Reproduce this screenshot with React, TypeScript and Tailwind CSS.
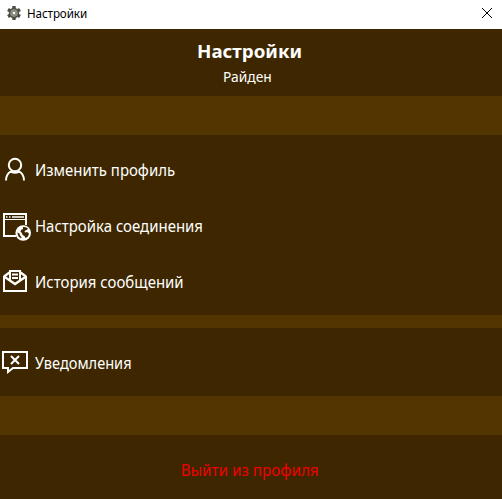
import type { ReactNode } from "react";

function GearIcon() {
  return (
    <svg width="14" height="14" viewBox="0 0 14 14" fill="none">
      <path d="M7 0v14M1 3.500l12 7M1 10.500l12-7" stroke="#4b4e43" strokeWidth="3.400" />
      <circle cx="7" cy="7" r="4.200" fill="#fff" stroke="#4b4e43" strokeWidth="2" />
      <circle cx="7" cy="7" r="3" fill="#fff" stroke="#8b8e7e" strokeWidth="1.600" />
      <circle cx="7" cy="7" r="1.900" fill="#fff" stroke="#4b4e43" strokeWidth=".8" />
    </svg>
  );
}

function UserIcon() {
  return (
    <svg width="32" height="32" viewBox="0 0 32 32" fill="none" stroke="#fff" strokeWidth="2">
      <circle cx="15" cy="11" r="6.200" />
      <path d="M6 26.500C6 22 8 18.800 11 17.300c2.500 1.700 5.500 1.700 8 0 3 1.500 5 4.700 5 9.200" />
    </svg>
  );
}

function BrowserIcon() {
  return (
    <svg width="32" height="32" viewBox="0 0 32 32" fill="none">
      <path d="M16 26H4V4h22v11" stroke="#fff" strokeWidth="2" />
      <path d="M4 9.500h22" stroke="#fff" />
      <path d="M6 7h1.500M9 7h1.500M12 7h12" stroke="#fff" strokeWidth="1.500" />
      <circle cx="23.200" cy="23" r="7.800" fill="#fff" />
      <path
        d="M23 17l3 .2 2 1.500-1.500 1.300-2 1 .5 1.500 2-.5 2 1.500-1 3-2.500 1.500-1-2-2-1-.5-2-1.500-1 .5-2 2-1zM17.200 22.500l2.300 1 .5 2 1.500 1.500-.5 1.500-2.500-2z"
        fill="#3e2700"
      />
    </svg>
  );
}

function MailIcon() {
  return (
    <svg width="32" height="32" viewBox="0 0 32 32" fill="none" stroke="#fff" strokeWidth="2">
      <path d="M4 10V25h22V10" />
      <path d="M4 10.500l11 7.500 11-7.500M4 10.500l5.500-4M26 10.500l-5.500-4" strokeWidth="2.300" />
      <path d="M10 14V5h10v9" />
      <path d="M12 8.500h6M12 12h6" strokeWidth="1.800" />
    </svg>
  );
}

function BubbleIcon() {
  return (
    <svg width="32" height="32" viewBox="0 0 32 32" fill="none" stroke="#fff" strokeWidth="2">
      <path d="M3 5h24v16H13l-5 4v-4H3z" />
      <path d="M11 9l8 8M19 9l-8 8" />
    </svg>
  );
}

function Row({ icon, label, scale }: { icon: ReactNode; label: string; scale: string }) {
  return (
    <button className="flex h-14 w-full items-center gap-[3px] text-left text-white">
      {icon}
      <span className={`origin-left whitespace-nowrap text-[16px] leading-6 ${scale}`}>{label}</span>
    </button>
  );
}

export default function App() {
  return (
    <div className="flex h-[499px] w-[502px] flex-col overflow-hidden bg-[#523500] font-['Noto_Sans','Open_Sans',sans-serif]">
      <header className="flex h-[29px] shrink-0 items-center bg-white pr-[9px] pl-[7px] text-black">
        <div className="-mt-[3px]"><GearIcon /></div>
        <span className="-mt-[2px] ml-[6px] origin-left scale-x-[0.97] text-[12px] leading-4 tracking-[-0.1px]">Настройки</span>
        <svg className="-mt-[3px] ml-auto" width="12" height="12" viewBox="0 0 12 12" stroke="#000">
          <path d="M1 1l10 10M11 1L1 11" />
        </svg>
      </header>
      <section className="flex h-[67px] shrink-0 flex-col items-center bg-[#3e2700] pt-[9px] pr-[3px] text-white">
        <h1 className="scale-x-[1.04] text-[18px] leading-[26px] font-bold">Настройки</h1>
        <p className="mr-[5px] scale-x-[0.92] text-[15px] leading-[25px]">Райден</p>
      </section>
      <section className="mt-[39px] h-[180px] shrink-0 bg-[#3e2700] pt-[7px]">
        <Row icon={<UserIcon />} label="Изменить профиль" scale="scale-x-[0.935]" />
        <Row icon={<BrowserIcon />} label="Настройка соединения" scale="scale-x-[0.935]" />
        <Row icon={<MailIcon />} label="История сообщений" scale="scale-x-[0.935]" />
      </section>
      <section className="mt-[13px] h-[68px] shrink-0 bg-[#3e2700] pt-[7px]">
        <Row icon={<BubbleIcon />} label="Уведомления" scale="scale-x-[0.91]" />
      </section>
      <section className="mt-[39px] flex h-[64px] shrink-0 justify-center bg-[#3e2700] pt-[23px] pr-[2px]">
        <button className="h-6 scale-x-[0.95] text-[16px] leading-6 text-[#f00000]">Выйти из профиля</button>
      </section>
    </div>
  );
}
